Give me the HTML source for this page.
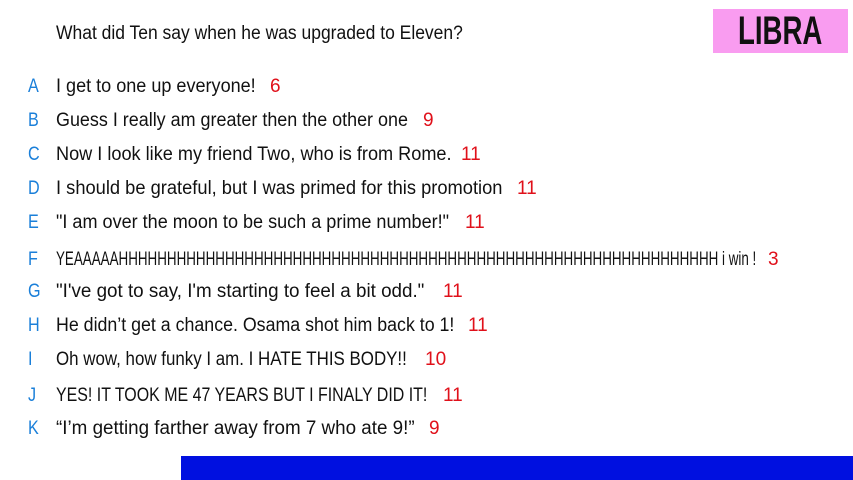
<!DOCTYPE html>
<html><head><meta charset="utf-8"><style>
body{margin:0;width:853px;height:480px;background:#fff;position:relative;overflow:hidden;font-family:"Liberation Sans",sans-serif;font-size:19px;color:#111}
.r{position:absolute;left:0;height:24px;line-height:24px;white-space:nowrap}
.l{position:absolute;left:28px;color:#1a7fd9;transform:scaleX(0.85);transform-origin:left}
.t{position:absolute;left:56px;transform-origin:left;display:inline-block}
.n{position:absolute;color:#e0101a}
#q{position:absolute;left:56px;top:22px;line-height:24px;transform:scaleX(0.92);transform-origin:left;white-space:nowrap}
#libra{position:absolute;left:713px;top:9px;width:135px;height:44px;background:#f99cf0}
#libra span{position:absolute;left:25px;top:0;font-size:40px;font-weight:bold;line-height:44px;color:#111;transform:scaleX(0.69);transform-origin:left;white-space:nowrap}
#bar{position:absolute;left:181px;top:456px;width:672px;height:24px;background:#0010e0}
</style></head><body>
<div id="q">What did Ten say when he was upgraded to Eleven?</div>
<div id="libra"><span>LIBRA</span></div>
<div class="r" style="top:75px"><span class="l">A</span><span class="t" style="transform:scaleX(0.95)">I get to one up everyone!</span><span class="n" style="left:270px">6</span></div>
<div class="r" style="top:109px"><span class="l">B</span><span class="t" style="transform:scaleX(0.944)">Guess I really am greater then the other one</span><span class="n" style="left:423px">9</span></div>
<div class="r" style="top:143px"><span class="l">C</span><span class="t" style="transform:scaleX(0.954)">Now I look like my friend Two, who is from Rome.</span><span class="n" style="left:461px">11</span></div>
<div class="r" style="top:177px"><span class="l">D</span><span class="t" style="transform:scaleX(0.963)">I should be grateful, but I was primed for this promotion</span><span class="n" style="left:517px">11</span></div>
<div class="r" style="top:211px"><span class="l">E</span><span class="t" style="transform:scaleX(0.95)">"I am over the moon to be such a prime number!"</span><span class="n" style="left:465px">11</span></div>
<div class="r" style="top:248px"><span class="l">F</span><span class="t" style="transform:scaleX(0.705)">YEAAAAAHHHHHHHHHHHHHHHHHHHHHHHHHHHHHHHHHHHHHHHHHHHHHHHHHHHHHHHHHHHHHH i win !</span><span class="n" style="left:768px">3</span></div>
<div class="r" style="top:280px"><span class="l">G</span><span class="t" style="transform:scaleX(0.99)">"I've got to say, I'm starting to feel a bit odd."</span><span class="n" style="left:443px">11</span></div>
<div class="r" style="top:314px"><span class="l">H</span><span class="t" style="transform:scaleX(0.936)">He didn’t get a chance. Osama shot him back to 1!</span><span class="n" style="left:468px">11</span></div>
<div class="r" style="top:348px"><span class="l">I</span><span class="t" style="transform:scaleX(0.89)">Oh wow, how funky I am. I HATE THIS BODY!!</span><span class="n" style="left:425px">10</span></div>
<div class="r" style="top:384px"><span class="l">J</span><span class="t" style="transform:scaleX(0.84)">YES! IT TOOK ME 47 YEARS BUT I FINALY DID IT!</span><span class="n" style="left:443px">11</span></div>
<div class="r" style="top:417px"><span class="l">K</span><span class="t" style="transform:scaleX(0.99)">“I’m getting farther away from 7 who ate 9!”</span><span class="n" style="left:429px">9</span></div>
<div id="bar"></div>
</body></html>
